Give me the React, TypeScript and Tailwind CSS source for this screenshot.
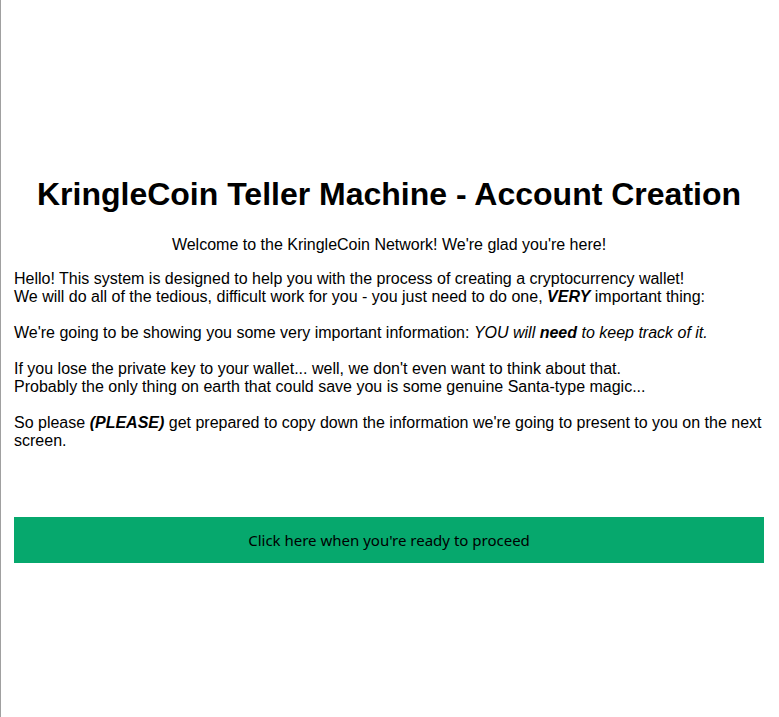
export default function App() {
  return (
    <div className="min-h-[717px] border-l border-[#a0a0a0] bg-white pl-[13px] pr-[15px] pt-[176px] text-black font-['Liberation_Sans',Arial,sans-serif]">
      <h1 className="text-center text-[32px] font-bold leading-[37px]">
        KringleCoin Teller Machine - Account Creation
      </h1>
      <p className="mt-[23px] text-center text-[16px] leading-[18.4px]">
        Welcome to the KringleCoin Network! We're glad you're here!
      </p>
      <div className="mt-[16px] text-[16px] leading-[18px]">
        Hello! This system is designed to help you with the process of creating a cryptocurrency wallet!
        <br />
        We will do all of the tedious, difficult work for you - you just need to do one,{' '}
        <b>
          <i>VERY</i>
        </b>{' '}
        important thing:
        <br />
        <br />
        We're going to be showing you some very important information:{' '}
        <i>
          YOU will <b>need</b> to keep track of it.
        </i>
        <br />
        <br />
        If you lose the private key to your wallet... well, we don't even want to think about that.
        <br />
        Probably the only thing on earth that could save you is some genuine Santa-type magic...
        <br />
        <br />
        So please{' '}
        <b>
          <i>(PLEASE)</i>
        </b>{' '}
        get prepared to copy down the information we're going to present to you on the next screen.
      </div>
      <button className="mt-[67px] flex h-[46px] w-full items-center justify-center bg-[#06a86d] text-[15px] text-black font-['Noto_Sans',sans-serif]">
        Click here when you're ready to proceed
      </button>
    </div>
  )
}
